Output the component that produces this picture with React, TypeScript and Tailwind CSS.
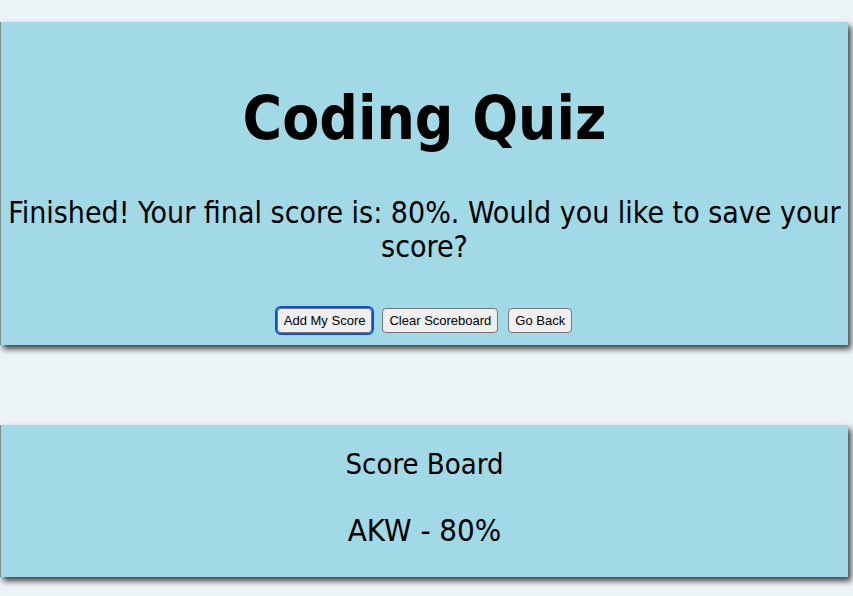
export default function App() {
  const font = { fontFamily: '"DejaVu Sans Condensed", "DejaVu Sans", sans-serif' }
  return (
    <div className="min-h-[596px] w-full bg-[#edf4f8] overflow-hidden" style={font}>
      <div className="h-[22px]" />
      <section className="w-[848px] h-[323px] bg-[#a1d9e6] border-l border-[#7a8f94] shadow-[3px_4px_6px_rgba(0,0,0,0.75)] flex flex-col items-center text-center text-black">
        <h1 className="mt-[60px] text-[60px] leading-[72px] font-bold">Coding Quiz</h1>
        <p className="mt-[42px] text-[30px] leading-[34px] px-1">
          Finished! Your final score is: 80%. Would you like to save your score?
        </p>
        <div
          className="mt-[44px] flex gap-[10px]"
          style={{ fontFamily: '"Liberation Sans", Arial, sans-serif' }}
        >
          <button className="h-[25px] px-[6px] text-[13px] bg-[#efefef] border border-[#767676] rounded-[4px] outline-2 outline-[#0b4fd6] outline-offset-0">
            Add My Score
          </button>
          <button className="h-[25px] px-[6px] text-[13px] bg-[#efefef] border border-[#767676] rounded-[4px]">
            Clear Scoreboard
          </button>
          <button className="h-[25px] px-[6px] text-[13px] bg-[#efefef] border border-[#767676] rounded-[4px]">
            Go Back
          </button>
        </div>
      </section>
      <div className="h-[80px]" />
      <section className="w-[848px] h-[152px] bg-[#a1d9e6] border-l border-[#7a8f94] shadow-[3px_4px_6px_rgba(0,0,0,0.75)] flex flex-col items-center text-center text-black">
        <h2 className="mt-[22px] text-[29px] leading-[34px]">Score Board</h2>
        <p className="mt-[31px] text-[31px] leading-[36px]">AKW - 80%</p>
      </section>
    </div>
  )
}
